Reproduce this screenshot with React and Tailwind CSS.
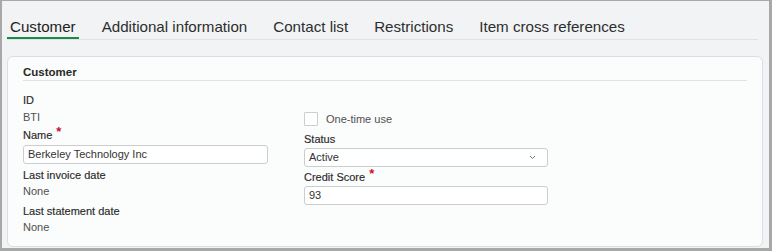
import React from "react";

const font = { fontFamily: '"Liberation Sans", Arial, sans-serif' };

function Label({ children, required }) {
  return (
    <div className="h-[16px] leading-[16px] text-[11px] text-[#2a2a2a] [-webkit-text-stroke:0.15px_#2a2a2a] flex items-start">
      <span>{children}</span>
      {required && (
        <span className="ml-[4px] text-[#c7111e] text-[13px] leading-[13px] font-bold [-webkit-text-stroke:0px] -mt-[2px]">*</span>
      )}
    </div>
  );
}

function Value({ children }) {
  return <div className="h-[16px] leading-[16px] text-[11px] text-[#505050]">{children}</div>;
}

function Input({ value, chevron }) {
  return (
    <div className="h-[19px] w-full border border-[#c9ced1] rounded-[3px] bg-white flex items-center pl-[4px] pr-[10px] text-[11px] text-[#333]">
      <span className="flex-1">{value}</span>
      {chevron && (
        <svg width="7" height="5" viewBox="0 0 7 5" className="mr-[1px]">
          <polyline points="1,1 3.5,3.5 6,1" fill="none" stroke="#777" strokeWidth="1" />
        </svg>
      )}
    </div>
  );
}

export default function App() {
  const tabs = ["Customer", "Additional information", "Contact list", "Restrictions", "Item cross references"];
  return (
    <div style={font} className="w-[772px] h-[251px] bg-[#f1f3f4] border-t border-l-2 border-r-[3px] border-b-[3px] border-[#a8a8a8] overflow-hidden">
      <div className="ml-[5px] mr-[11px] flex gap-[20px] border-b border-[#dfe3e5]">
        {tabs.map((t, i) => (
          <div
            key={t}
            className={
              "px-[3px] pt-[17px] pb-[1px] text-[15.15px] leading-[18px] border-b-2 " +
              (i === 0 ? "border-[#1a8a4a] text-[#222]" : "border-transparent text-[#2e2e2e]")
            }
          >
            {t}
          </div>
        ))}
      </div>
      <div className="ml-[5px] mt-[16px] w-[756px] h-[191px] border border-[#dcdfe1] rounded-[6px] bg-[#fbfcfc] px-[15px]">
        <div className="pt-[8px] pb-[1px] border-b border-[#dfe3e5] text-[11.5px] leading-[14px] font-bold text-[#2a2a2a]">
          Customer
        </div>
        <div className="mt-[11px] flex gap-[36px]">
          <div className="w-[245px] flex flex-col">
            <Label>ID</Label>
            <div className="mt-[1px]"><Value>BTI</Value></div>
            <div className="mt-[2px]"><Label required>Name</Label></div>
            <div className="mt-[2px]"><Input value="Berkeley Technology Inc" /></div>
            <div className="mt-[3px]"><Label>Last invoice date</Label></div>
            <Value>None</Value>
            <div className="mt-[4px]"><Label>Last statement date</Label></div>
            <Value>None</Value>
          </div>
          <div className="w-[244px] flex flex-col">
            <div className="mt-[20px] h-[14px] flex items-center">
              <div className="w-[14px] h-[14px] border border-[#c9ced1] rounded-[1px] bg-white" />
              <span className="ml-[8px] text-[11px] text-[#505050]">One-time use</span>
            </div>
            <div className="mt-[5px]"><Label>Status</Label></div>
            <div className="mt-[1px]"><Input value="Active" chevron /></div>
            <div className="mt-[2px]"><Label required>Credit Score</Label></div>
            <div className="mt-[1px]"><Input value="93" /></div>
          </div>
        </div>
      </div>
    </div>
  );
}
